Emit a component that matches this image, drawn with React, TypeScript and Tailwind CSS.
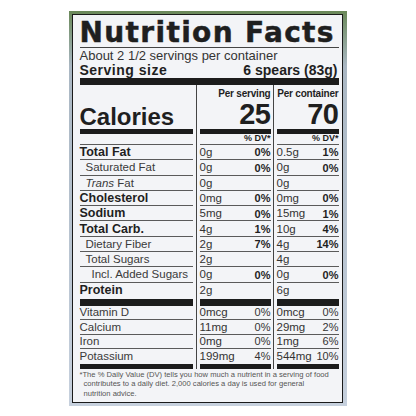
import React from 'react';

type Row = {
  label: React.ReactNode;
  bold?: boolean;
  indent?: 0 | 1 | 2;
  s: string;
  sp?: string;
  c: string;
  cp?: string;
};

const nutrients: Row[] = [
  { label: 'Total Fat', bold: true, s: '0g', sp: '0%', c: '0.5g', cp: '1%' },
  { label: 'Saturated Fat', indent: 1, s: '0g', sp: '0%', c: '0g', cp: '0%' },
  { label: <><i>Trans</i> Fat</>, indent: 1, s: '0g', c: '0g' },
  { label: 'Cholesterol', bold: true, s: '0mg', sp: '0%', c: '0mg', cp: '0%' },
  { label: 'Sodium', bold: true, s: '5mg', sp: '0%', c: '15mg', cp: '1%' },
  { label: 'Total Carb.', bold: true, s: '4g', sp: '1%', c: '10g', cp: '4%' },
  { label: 'Dietary Fiber', indent: 1, s: '2g', sp: '7%', c: '4g', cp: '14%' },
  { label: 'Total Sugars', indent: 1, s: '2g', c: '4g' },
  { label: 'Incl. Added Sugars', indent: 2, s: '0g', sp: '0%', c: '0g', cp: '0%' },
  { label: 'Protein', bold: true, s: '2g', c: '6g' },
];

const vitamins = [
  { label: 'Vitamin D', s: '0mcg', sp: '0%', c: '0mcg', cp: '0%' },
  { label: 'Calcium', s: '11mg', sp: '0%', c: '29mg', cp: '2%' },
  { label: 'Iron', s: '0mg', sp: '0%', c: '1mg', cp: '6%' },
  { label: 'Potassium', s: '199mg', sp: '4%', c: '544mg', cp: '10%' },
];

function NutrientRow({ last, children }: { last?: boolean; children: React.ReactNode }) {
  return (
    <div
      className={`h-[15.3px] pt-[1px] flex items-center justify-between ${last ? '' : 'border-b border-[#5a5a5a]'}`}
    >
      {children}
    </div>
  );
}

function VitaminRow({ last, children }: { last?: boolean; children: React.ReactNode }) {
  return (
    <div
      className={`h-[14.5px] flex items-center justify-between ${last ? '' : 'border-b border-[#5a5a5a]'}`}
    >
      {children}
    </div>
  );
}

function ValueColumn({ head, big, side }: { head: string; big: string; side: 's' | 'c' }) {
  return (
    <div className="flex flex-col">
      <div className="h-[44px] flex flex-col items-end">
        <div className="mt-[4px] text-[10px] leading-[10px] font-bold tracking-[-0.2px] whitespace-nowrap">
          {head}
        </div>
        <div className="text-[29px] leading-[30px] font-bold tracking-[-0.5px]">{big}</div>
      </div>
      <div className="h-[5px] bg-[#1c1c1c]" />
      <div className="h-[11px] border-b border-[#5a5a5a] flex items-center justify-end text-[9px] font-bold">
        % DV*
      </div>
      {nutrients.map((r, i) => (
        <NutrientRow key={i} last={i === nutrients.length - 1}>
          <span className="text-[11.5px] text-[#333]">{side === 's' ? r.s : r.c}</span>
          <span className="text-[11px] font-bold">{side === 's' ? r.sp : r.cp}</span>
        </NutrientRow>
      ))}
      <div className="mt-[1px] h-[7px] bg-[#1c1c1c]" />
      {vitamins.map((r, i) => (
        <VitaminRow key={i} last={i === vitamins.length - 1}>
          <span className="text-[11.5px] text-[#333]">{side === 's' ? r.s : r.c}</span>
          <span className="text-[11px] text-[#333]">{side === 's' ? r.sp : r.cp}</span>
        </VitaminRow>
      ))}
      <div className="h-[5px] bg-[#1c1c1c]" />
    </div>
  );
}

export default function App() {
  return (
    <div className="w-[416px] h-[416px] bg-white font-['Liberation_Sans',Arial,sans-serif] text-[#1f1f1f] overflow-hidden">
      {/* backing card behind the label */}
      <div className="ml-[69px] mt-[11px] w-[278px] h-[395px] pt-[3px] pl-[3px] pr-[4px] pb-[3px] bg-linear-to-b from-[#6a8858] via-[#aab7c3] via-[14%] to-[#c6d0dd]">
        <div className="h-full border-[1.5px] border-[#1a1a1a] bg-[#f3f4f7] pl-[6.5px] pr-[3.5px] pt-[4px]">
          <div className="w-[259px]">
            <h1 className="font-['DejaVu_Sans',sans-serif] font-bold text-[28px] leading-[28px] tracking-[1.35px] whitespace-nowrap border-b border-[#444] [-webkit-text-stroke:0.5px_#1f1f1f]">
              Nutrition Facts
            </h1>
            <div className="mt-[1px] text-[13px] leading-[13px] text-[#333] whitespace-nowrap">
              About 2 1/2 servings per container
            </div>
            <div className="mt-[1px] flex justify-between text-[14px] leading-[14px] font-bold">
              <span className="tracking-[0.5px]">Serving size</span>
              <span className="pr-[1px]">6 spears (83g)</span>
            </div>
            <div className="mt-[1px] h-[7px] bg-[#1c1c1c]" />

            <div className="flex">
              {/* label column */}
              <div className="w-[116px] pr-[3px] flex flex-col">
                <div className="h-[44px] flex items-end">
                  <div className="text-[24px] leading-[24px] font-bold mb-[0.5px]">Calories</div>
                </div>
                <div className="h-[5px] bg-[#1c1c1c]" />
                <div className="h-[11px] border-b border-[#5a5a5a]" />
                {nutrients.map((r, i) => (
                  <NutrientRow key={i} last={i === nutrients.length - 1}>
                    <span
                      className={`whitespace-nowrap ${
                        r.bold ? 'text-[12.5px] font-bold' : 'text-[11.5px] text-[#3a3a3a]'
                      } ${r.indent === 1 ? 'pl-[6px]' : r.indent === 2 ? 'pl-[12px]' : ''}`}
                    >
                      {r.label}
                    </span>
                  </NutrientRow>
                ))}
                <div className="mt-[1px] h-[7px] bg-[#1c1c1c]" />
                {vitamins.map((r, i) => (
                  <VitaminRow key={i} last={i === vitamins.length - 1}>
                    <span className="text-[11.5px] text-[#3a3a3a]">{r.label}</span>
                  </VitaminRow>
                ))}
                <div className="h-[5px] bg-[#1c1c1c]" />
              </div>

              <div className="w-[77px] border-l border-[#444] pl-[3px] pr-[2px]">
                <ValueColumn head="Per serving" big="25" side="s" />
              </div>
              <div className="w-[66px] border-l border-[#444] pl-[3px]">
                <ValueColumn head="Per container" big="70" side="c" />
              </div>
            </div>

            <div className="mt-[1px] text-[7.6px] leading-[9.5px] text-[#555] whitespace-nowrap">
              <div>*The % Daily Value (DV) tells you how much a nutrient in a serving of food</div>
              <div className="pl-[4px]">contributes to a daily diet. 2,000 calories a day is used for general</div>
              <div className="pl-[4px]">nutrition advice.</div>
            </div>
          </div>
        </div>
      </div>
    </div>
  );
}
